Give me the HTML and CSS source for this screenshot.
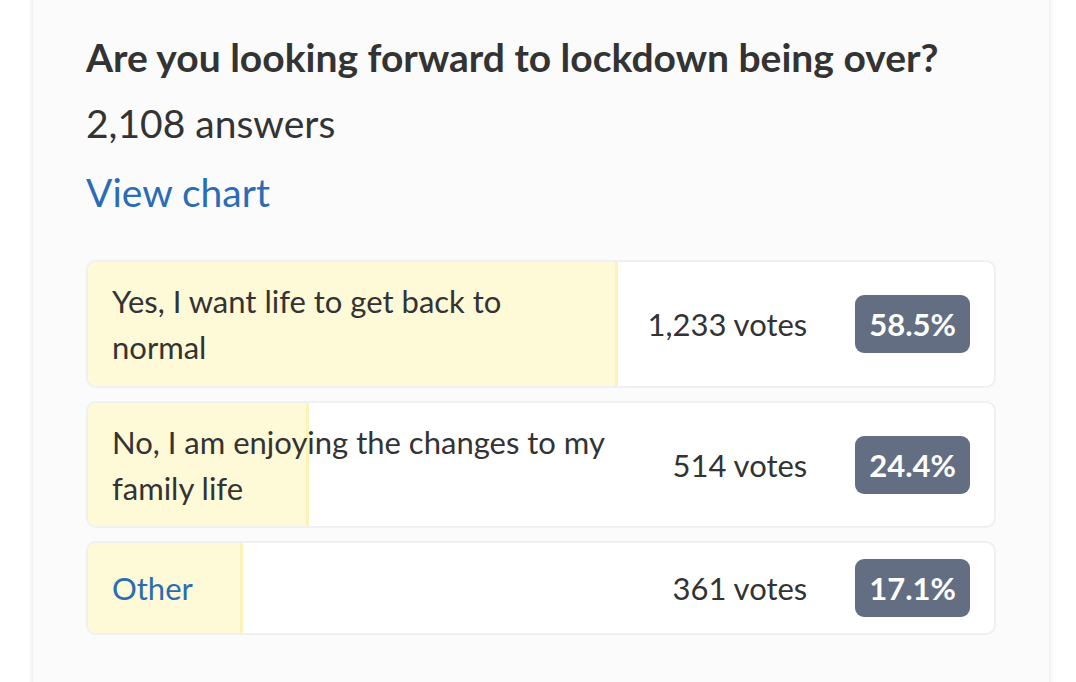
FILE: index.html
```html
<!DOCTYPE html>
<html lang="en">
<head>
    <meta charset="UTF-8">
    <meta name="viewport" content="width=device-width, initial-scale=1.0">
    <title>Poll results</title>
    <link rel="stylesheet" href="styles.css">
</head>
<body>
    <div class="card">
        <h1 class="question">Are you looking forward to lockdown being over?</h1>
        <p class="answers">2,108 answers</p>
        <a class="chart-link" href="#">View chart</a>

        <div class="options">
            <div class="option">
                <div class="fill" style="width: 58.5%"></div>
                <div class="label">Yes, I want life to get back to<br>normal</div>
                <div class="votes">1,233 votes</div>
                <div class="badge">58.5%</div>
            </div>
            <div class="option">
                <div class="fill" style="width: 24.4%"></div>
                <div class="label">No, I am enjoying the changes to my family life</div>
                <div class="votes">514 votes</div>
                <div class="badge">24.4%</div>
            </div>
            <div class="option">
                <div class="fill" style="width: 17.1%"></div>
                <div class="label link">Other</div>
                <div class="votes">361 votes</div>
                <div class="badge">17.1%</div>
            </div>
        </div>
    </div>
</body>
</html>
```

FILE: styles.css
```css
body {
    margin: 0;
    background: #fff;
    font-family: Lato, "Open Sans", sans-serif;
    color: #333;
    overflow: hidden;
}
.card {
    margin: -10px 27px 0 33px;
    min-height: 720px;
    padding: 43px 53px 0;
    background: #fbfbfc;
    box-shadow: 0 0 6px rgba(0, 0, 0, 0.12);
}
.question {
    margin: 0 0 19px;
    font-size: 39px;
    line-height: 48px;
    font-weight: 700;
}
.answers {
    margin: 0 0 23px;
    font-size: 39px;
    line-height: 46px;
}
.chart-link {
    display: block;
    margin-bottom: 45px;
    font-size: 39px;
    line-height: 46px;
    color: #2a6db5;
    text-decoration: none;
}
.options {
    display: flex;
    flex-direction: column;
    gap: 13px;
}
.option {
    position: relative;
    display: flex;
    align-items: center;
    padding: 16px 24px 15.5px;
    background: #fff;
    border: 2px solid #eef0f3;
    border-radius: 10px;
    overflow: hidden;
    font-size: 31px;
    line-height: 46px;
}
.fill {
    position: absolute;
    top: 0;
    bottom: 0;
    left: 0;
    background: #fef9d6;
    border-right: 3px solid #fdf3b8;
    box-sizing: border-box;
}
.label {
    position: relative;
    flex: 1;
    padding-right: 30px;
}
.label.link {
    color: #2a6db5;
}
.votes {
    position: relative;
    min-width: 160px;
    text-align: right;
}
.badge {
    position: relative;
    margin-left: 48px;
    height: 58px;
    padding: 0 14px;
    line-height: 58px;
    background: #636e82;
    color: #fff;
    font-weight: 700;
    border-radius: 9px;
}
```
